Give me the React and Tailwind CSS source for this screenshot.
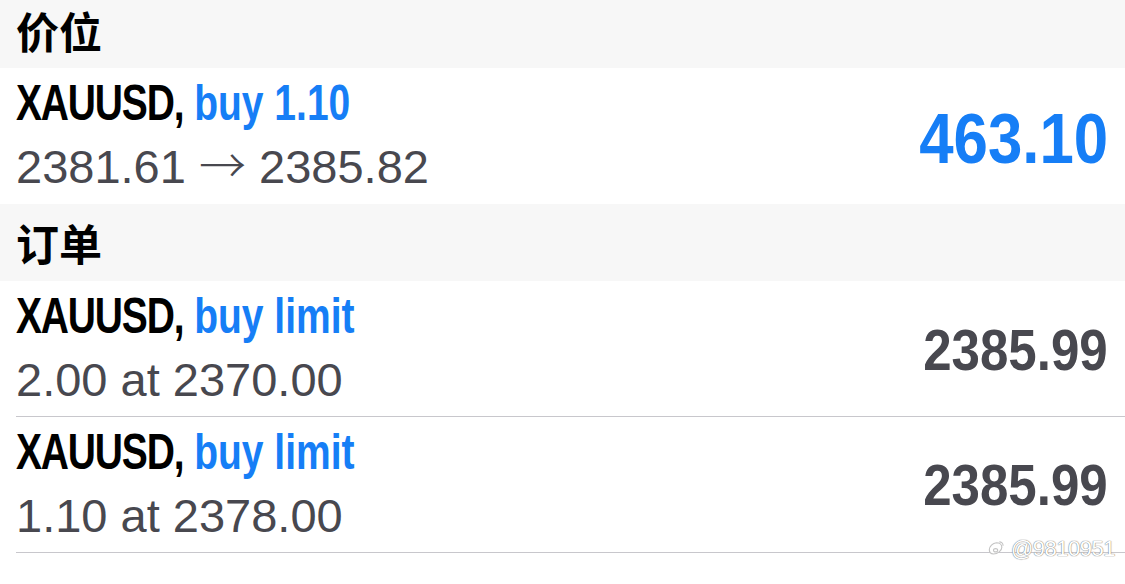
import React from "react";

const CJK = "font-['Noto_Sans_CJK_SC',sans-serif]";
const LIB = "font-['Liberation_Sans',Arial,sans-serif]";

function Header({ label, h, pb }) {
  return (
    <div className={`flex items-center bg-[#f7f7f7] pl-4 ${h} ${pb}`}>
      <span className={`${CJK} text-[43px] font-bold leading-none text-black`}>{label}</span>
    </div>
  );
}

function Row({ action, sub, value, border }) {
  return (
    <div
      className={`flex h-[136px] items-start justify-between pr-[17px] ${
        border ? "ml-4 border-b border-[#c8c7cc]" : "pl-4"
      }`}
    >
      <div className={`flex flex-col pt-[10px] ${LIB}`}>
        <div className="h-[50px] origin-left scale-x-[0.78] whitespace-nowrap text-[50px] font-bold leading-[50px]">
          <span className="tracking-[-1.5px] text-black">XAUUSD,</span>{" "}
          <span className="text-[#167ef6]">{action}</span>
        </div>
        <div className="mt-[15px] h-[47px] whitespace-nowrap text-[47px] leading-[47px] text-[#48484f]">{sub}</div>
      </div>
      <div className="flex h-full items-center">{value}</div>
    </div>
  );
}

export default function App() {
  return (
    <div className="relative h-[584px] w-full overflow-hidden bg-white">
      <Header label="价位" h="h-[68px]" pb="pb-[8px]" />
      <Row
        action="buy 1.10"
        sub={
          <>
            2381.61 <span className={`${CJK} font-light leading-[16px]`}>→</span> 2385.82
          </>
        }
        value={
          <span
            className={`${LIB} mt-[4px] block origin-right scale-x-[0.87] text-[71px] font-bold leading-none text-[#167ef6]`}
          >
            463.10
          </span>
        }
      />
      <Header label="订单" h="h-[77px]" pb="" />
      <Row
        action="buy limit"
        sub="2.00 at 2370.00"
        border
        value={
          <span
            className={`${LIB} mt-[3px] block origin-right scale-x-[0.88] text-[58px] font-bold leading-none text-[#48484f]`}
          >
            2385.99
          </span>
        }
      />
      <Row
        action="buy limit"
        sub="1.10 at 2378.00"
        border
        value={
          <span
            className={`${LIB} mt-[1px] block origin-right scale-x-[0.88] text-[58px] font-bold leading-none text-[#48484f]`}
          >
            2385.99
          </span>
        }
      />
      <div className="absolute right-[10px] top-[538px] flex items-center gap-[5px]">
        <svg width="20" height="20" viewBox="0 0 24 24" fill="none" stroke="#c4c4c4" strokeWidth="1.4">
          <path d="M4 13c0-4 4-8 8.5-8.5C16 4.5 19 6.5 19 10c0 4-5 8-10 8-3 0-5-2-5-5z" fill="white" />
          <path d="M9 13.5a2.5 2 0 1 0 5 0a2.5 2 0 1 0-5 0" />
          <path d="M16 3.5c2.5 0 4.5 2 4.5 4.5" />
        </svg>
        <span className="font-['Liberation_Sans',sans-serif] text-[22px] leading-none tracking-[-0.5px] text-white [text-shadow:0_0_1px_#777,0_0_1px_#777]">
          @9810951
        </span>
      </div>
    </div>
  );
}
